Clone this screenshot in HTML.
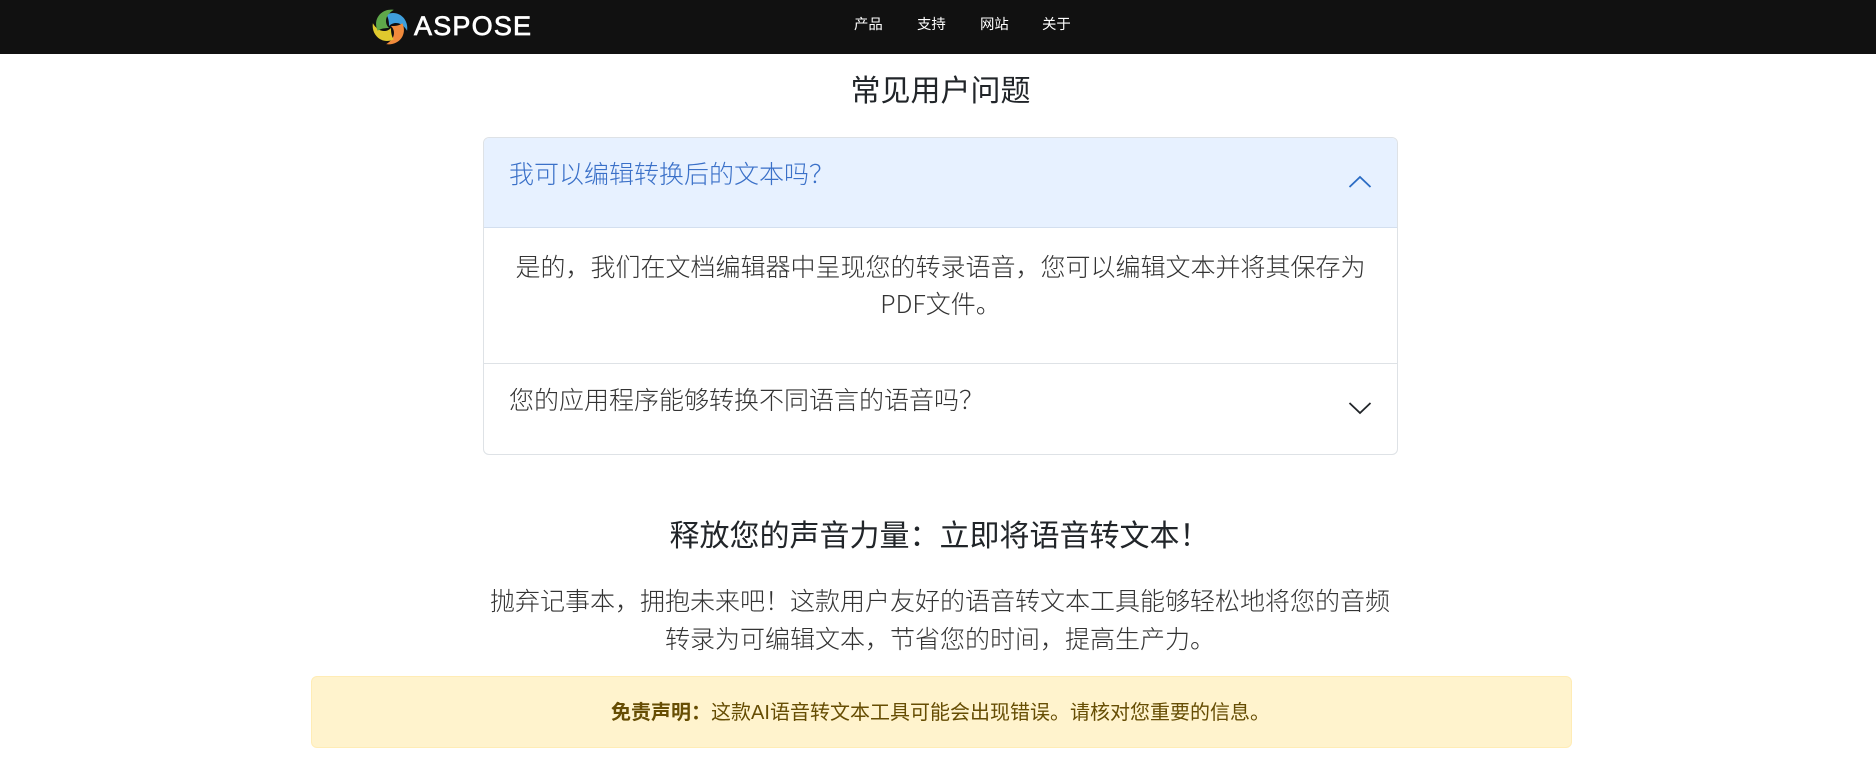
<!DOCTYPE html>
<html lang="zh">
<head>
<meta charset="utf-8">
<title>常见用户问题</title>
<style>
html,body{margin:0;padding:0;background:#fff;}
body{width:1876px;height:760px;overflow:hidden;position:relative;font-family:"Liberation Sans","Noto Sans CJK SC",sans-serif;font-weight:300;color:#212529;}
.a{position:absolute;white-space:nowrap;}
.c{position:absolute;white-space:nowrap;text-align:center;}
.cj{font-family:"Noto Sans CJK SC","Liberation Sans",sans-serif;}
#hd{position:absolute;left:0;top:0;width:1876px;height:54px;background:#111;}
.nav{position:absolute;top:15px;font-size:14.4px;line-height:20px;color:#fff;font-weight:400;white-space:nowrap;}
#logo{position:absolute;left:371px;top:8px;}
#brand{position:absolute;left:414px;top:10px;font-size:27px;line-height:32px;color:#fff;font-weight:400;letter-spacing:1.2px;-webkit-text-stroke:.7px #fff;}
#acc{position:absolute;left:483px;top:137px;width:913px;height:316px;border:1px solid #dee2e6;border-radius:6px;overflow:hidden;background:#fff;}
#acc .h1{position:absolute;left:0;top:0;width:913px;height:89px;background:#e7f1ff;border-bottom:1px solid #d3dfef;}
#acc .d{position:absolute;left:0;top:225px;width:913px;height:1px;background:#dee2e6;}
</style>
</head>
<body>
<div id="hd"></div>
<svg id="logo" width="38" height="38" viewBox="-20 -20 40 40">
<path fill="#3f9fdc" transform="rotate(90)" d="M4-18C-8-20-19-9-13 4C-10 1.500-5 1-1 1C-5.500-3-6.500-12 4-18Z"/>
<path fill="#f08a3c" transform="rotate(180)" d="M4-18C-8-20-19-9-13 4C-10 1.500-5 1-1 1C-5.500-3-6.500-12 4-18Z"/>
<path fill="#e0c92e" transform="rotate(270)" d="M4-18C-8-20-19-9-13 4C-10 1.500-5 1-1 1C-5.500-3-6.500-12 4-18Z"/>
<path fill="#5fa84a" d="M4-18C-8-20-19-9-13 4C-10 1.500-5 1-1 1C-5.500-3-6.500-12 4-18Z"/>
</svg>
<div id="brand">ASPOSE</div>
<div class="nav" style="left:854px">产品</div>
<div class="nav" style="left:917px">支持</div>
<div class="nav" style="left:980px">网站</div>
<div class="nav" style="left:1042px">关于</div>

<div class="c" style="left:0;width:1881px;top:70px;font-size:30px;line-height:44px;font-weight:400;">常见用户问题</div>

<div id="acc">
<div class="h1"></div>
<div class="d"></div>
</div>
<div class="a cj" style="left:509px;top:155px;font-size:25px;line-height:36px;color:#3a70c8;">我可以编辑转换后的文本吗&#xFF1F;</div>
<svg class="a" style="left:1340px;top:165px" width="40" height="40" viewBox="0 0 40 40"><path d="M9.500 22L20 12L30.500 22" fill="none" stroke="#2b6cc4" stroke-width="1.800"/></svg>
<div class="c cj" style="left:483px;width:915px;top:248px;font-size:25px;line-height:37px;color:#333;">是的&#xFF0C;我们在文档编辑器中呈现您的转录语音&#xFF0C;您可以编辑文本并将其保存为<br>PDF文件。</div>
<div class="a cj" style="left:509px;top:381px;font-size:25px;line-height:36px;color:#333;">您的应用程序能够转换不同语言的语音吗&#xFF1F;</div>
<svg class="a" style="left:1340px;top:390px" width="40" height="40" viewBox="0 0 40 40"><path d="M9.500 13L20 23L30.500 13" fill="none" stroke="#212529" stroke-width="1.800"/></svg>

<div class="c cj" style="left:0;width:1879px;top:511px;font-size:30px;line-height:44px;font-weight:400;">释放您的声音力量&#xFF1A;立即将语音转文本&#xFF01;</div>
<div class="c cj" style="left:0;width:1880px;top:581px;font-size:25px;line-height:38px;color:#333;">抛弃记事本&#xFF0C;拥抱未来吧&#xFF01;这款用户友好的语音转文本工具能够轻松地将您的音频<br>转录为可编辑文本&#xFF0C;节省您的时间&#xFF0C;提高生产力。</div>

<div class="a" style="left:311px;top:676px;width:1259px;height:70px;background:#fff3cd;border:1px solid #ffecb5;border-radius:6px;"></div>
<div class="c" style="left:311px;width:1259px;top:698px;font-size:20px;line-height:30px;color:#664d03;font-weight:400;"><b style="font-weight:700">免责声明&#xFF1A;</b>这款AI语音转文本工具可能会出现错误。请核对您重要的信息。</div>
</body>
</html>
